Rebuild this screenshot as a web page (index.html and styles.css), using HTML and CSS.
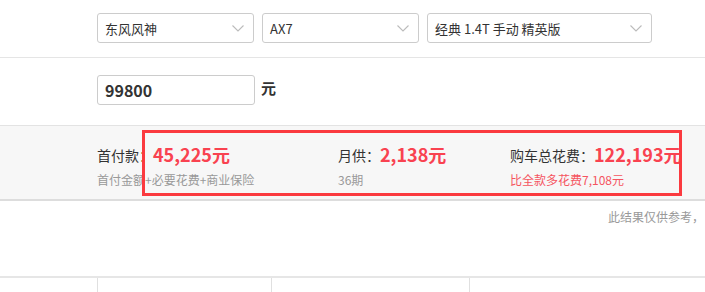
FILE: index.html
```html
<!DOCTYPE html>
<html lang="zh-CN">
<head>
    <meta charset="UTF-8"/>
    <title>购车计算器</title>
    <link rel="stylesheet" href="styles.css">
</head>
<body>
    <div class="calc">
        <div class="row row-car">
            <div class="select sel-brand"><span>东风风神</span><svg class="arrow" width="12" height="7" viewBox="0 0 12 7"><path d="M0.5 0.5 L6 6 L11.5 0.5" fill="none" stroke="#bbb" stroke-width="1.1"/></svg></div>
            <div class="select sel-series"><span>AX7</span><svg class="arrow" width="12" height="7" viewBox="0 0 12 7"><path d="M0.5 0.5 L6 6 L11.5 0.5" fill="none" stroke="#bbb" stroke-width="1.1"/></svg></div>
            <div class="select sel-model"><span>经典 1.4T 手动 精英版</span><svg class="arrow" width="12" height="7" viewBox="0 0 12 7"><path d="M0.5 0.5 L6 6 L11.5 0.5" fill="none" stroke="#bbb" stroke-width="1.1"/></svg></div>
        </div>

        <div class="row row-price">
            <div class="price-input">99800</div>
            <span class="unit">元</span>
        </div>

        <div class="result">
            <div class="result-col col-first">
                <div class="res-title">首付款：<b>45,225元</b></div>
                <div class="res-sub">首付金额+必要花费+商业保险</div>
            </div>
            <div class="result-col col-month">
                <div class="res-title">月供：<b>2,138元</b></div>
                <div class="res-sub">36期</div>
            </div>
            <div class="result-col col-total">
                <div class="res-title">购车总花费：<b>122,193元</b></div>
                <div class="res-sub red">比全款多花费7,108元</div>
            </div>
            <div class="mark"></div>
        </div>

        <div class="note">此结果仅供参考，</div>

        <div class="table">
            <div class="cell c1"></div>
            <div class="cell c2"></div>
            <div class="cell c3"></div>
            <div class="cell c4"></div>
        </div>
    </div>
</body>
</html>
```

FILE: styles.css
```css
html, body {
    margin: 0;
    padding: 0;
    background: #fff;
    overflow: hidden;
}

body {
    font-family: "Microsoft YaHei", "Noto Sans CJK SC", sans-serif;
    color: #333;
    width: 705px;
    height: 292px;
}

.row {
    display: flex;
    align-items: flex-start;
    padding-left: 97px;
    box-sizing: border-box;
}

.row-car {
    height: 58px;
    gap: 8px;
    padding-top: 13px;
    border-bottom: 1px solid #e5e5e5;
}

.select {
    box-sizing: border-box;
    height: 30px;
    border: 1px solid #ccc;
    border-radius: 3px;
    display: flex;
    align-items: center;
    justify-content: space-between;
    padding: 0 9px 0 7px;
    font-size: 13px;
    color: #333;
}

.sel-brand,
.sel-series {
    width: 157px;
}

.sel-model {
    width: 225px;
}

.arrow {
    display: block;
}

.row-price {
    height: 67px;
    gap: 6px;
    padding-top: 17px;
}

.price-input {
    box-sizing: border-box;
    width: 158px;
    height: 30px;
    border: 1px solid #ccc;
    border-radius: 3px;
    padding-left: 7px;
    line-height: 28px;
    font-size: 16px;
    font-weight: bold;
    color: #333;
}

.unit {
    font-size: 15px;
    font-weight: bold;
    color: #333;
    line-height: 26px;
}

.result {
    position: relative;
    background: #f7f7f7;
    border-top: 1px solid #e3e3e3;
    border-bottom: 2px solid #ddd;
    display: grid;
    grid-template-columns: 241px 172px auto;
    padding-left: 97px;
    padding-top: 16px;
    box-sizing: border-box;
    height: 76px;
}

.res-title {
    font-size: 14px;
    color: #333;
    white-space: nowrap;
    line-height: 24px;
}

.res-title b {
    font-size: 18px;
    color: #f94250;
    vertical-align: -1px;
}

.res-sub {
    font-size: 12px;
    color: #999;
    margin-top: 4px;
    white-space: nowrap;
}

.res-sub.red {
    color: #f5545f;
}

.mark {
    position: absolute;
    left: 142px;
    top: 4px;
    width: 540px;
    height: 66px;
    box-sizing: border-box;
    border: 3px solid #fb3a3f;
}

.note {
    font-size: 12px;
    color: #999;
    padding-left: 608px;
    padding-top: 7px;
    height: 75px;
    white-space: nowrap;
    box-sizing: border-box;
}

.table {
    display: grid;
    grid-template-columns: 97px 174px 198px auto;
    border-top: 2px solid #e6e6e6;
    height: 20px;
}

.cell {
    border-left: 1px solid #e0e0e0;
}

.c1 {
    border-left: none;
}
```
